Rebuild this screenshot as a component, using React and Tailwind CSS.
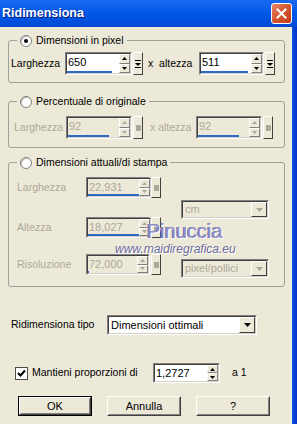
import React from "react";

const Arrow = ({ dir, color, w = 5, h = 3 }) => (
  <svg width={w} height={h} viewBox={`0 0 ${w} ${h}`}>
    <polygon
      points={dir === "up" ? `${w / 2},0 ${w},${h} 0,${h}` : `0,0 ${w},0 ${w / 2},${h}`}
      fill={color}
    />
  </svg>
);

const SpinBtn = ({ dir, disabled }) => (
  <div className="flex-1 flex items-center justify-center bg-[#ece9d8] border border-t-white border-l-white border-b-[#808080] border-r-[#808080]">
    <Arrow dir={dir} color={disabled ? "#aca899" : "#000"} />
  </div>
);

const ExtraBtn = ({ disabled }) => (
  <div className="w-[10px] flex items-center justify-center bg-[#ece9d8] border border-t-white border-l-white border-b-[#404040] border-r-[#404040]">
    {disabled ? (
      <div className="w-[5px] h-[6px] bg-[#aca899]" />
    ) : (
      <svg width="6" height="9" viewBox="0 0 6 9">
        <rect x="0" y="1" width="6" height="1" fill="#000" />
        <polygon points="0,4 6,4 3,7" fill="#000" />
        <rect x="0" y="8" width="6" height="1" fill="#000" />
      </svg>
    )}
  </div>
);

const Sunken = ({ className = "", inner = "", children }) => (
  <div className={`flex border border-t-[#808080] border-l-[#808080] border-b-white border-r-white ${className}`}>
    <div className={`flex-1 flex border border-t-[#404040] border-l-[#404040] border-b-[#d4d0c8] border-r-[#d4d0c8] ${inner}`}>
      {children}
    </div>
  </div>
);

const SpinField = ({ value, w, bar, disabled, h = "h-[23px]", extra = true }) => (
  <div className={`flex gap-[1px] ${h}`}>
    <Sunken className={w} inner={disabled ? "bg-[#ece9d8]" : "bg-white"}>
      <div className="flex-1 flex flex-col">
        <span className={`pl-[1px] pt-[1px] text-[11px] leading-[14px] ${disabled ? "text-[#aca899]" : "text-black"}`}>
          {value}
        </span>
        <div className="mt-auto h-[2px] bg-[#316ac5]" style={{ width: bar }} />
      </div>
      <div className="w-[11px] flex flex-col">
        <SpinBtn dir="up" disabled={disabled} />
        <SpinBtn dir="down" disabled={disabled} />
      </div>
    </Sunken>
    {extra && <ExtraBtn disabled={disabled} />}
  </div>
);

const Combo = ({ value, w, h, disabled }) => (
  <Sunken className={`${w} ${h}`} inner={disabled ? "bg-[#ece9d8]" : "bg-white"}>
    <span className={`flex-1 pl-[2px] flex items-center text-[11px] ${disabled ? "text-[#aca899]" : "text-black"}`}>
      {value}
    </span>
    <div className="w-[16px] flex items-center justify-center bg-[#ece9d8] border border-t-white border-l-white border-b-[#404040] border-r-[#404040]">
      <Arrow dir="down" w={7} h={4} color={disabled ? "#aca899" : "#000"} />
    </div>
  </Sunken>
);

const Radio = ({ checked }) => (
  <span className="w-[12px] h-[12px] rounded-full border border-[#7f7f7f] bg-white shadow-[inset_1px_1px_0_#c0c0c0] flex items-center justify-center">
    {checked && <span className="w-[4px] h-[4px] rounded-full bg-black" />}
  </span>
);

const Legend = ({ checked, children }) => (
  <legend className="ml-[8px] px-[3px]">
    <span className="flex items-center gap-[4px] h-[13px] leading-[13px]">
      <Radio checked={checked} />
      <span className="text-black">{children}</span>
    </span>
  </legend>
);

const Button = ({ children, isDefault }) => (
  <div className={`w-[74px] h-[20px] ${isDefault ? "border border-black" : ""}`}>
    <div className="h-full flex border border-t-white border-l-white border-b-[#404040] border-r-[#404040]">
      <div className="flex-1 flex items-center justify-center bg-[#ece9d8] border border-transparent border-b-[#808080] border-r-[#808080] text-[11px]">
        {children}
      </div>
    </div>
  </div>
);

export default function App() {
  return (
    <div className="relative w-[297px] h-[424px] overflow-hidden flex flex-col bg-[#ece9d8] font-['Liberation_Sans',Arial,sans-serif] text-[10.5px] text-black select-none">
      {/* title bar */}
      <div className="h-[27px] shrink-0 flex items-center justify-between pl-[2px] pr-[5px] bg-gradient-to-b from-[#1a68ef] via-[#0057e6] to-[#0049d6]">
        <span className="text-white font-bold text-[12.5px] [text-shadow:1px_1px_0_#0a1a7a]">Ridimensiona</span>
        <div className="w-[21px] h-[21px] rounded-[3px] border border-white bg-gradient-to-br from-[#e8866a] via-[#d4552f] to-[#c13d16] flex items-center justify-center">
          <svg width="11" height="11" viewBox="0 0 11 11">
            <path d="M1.5 1.5 L9.5 9.5 M9.5 1.5 L1.5 9.5" stroke="#fff" strokeWidth="2" strokeLinecap="square" />
          </svg>
        </div>
      </div>

      <div className="flex-1 flex">
        <div className="flex-1 flex flex-col pl-[8px] pr-[6px]">
          {/* group 1 */}
          <fieldset className="mt-[7px] border border-[#a0a09a] rounded-[3px] pb-[7px]">
            <Legend checked>Dimensioni in pixel</Legend>
            <div className="mt-[5px] flex items-center pl-[2px]">
              <span className="w-[54px]">Larghezza</span>
              <SpinField value="650" w="w-[67px]" bar={45} />
              <span className="ml-[5px] w-[51px]">x&nbsp; altezza</span>
              <SpinField value="511" w="w-[65px]" bar={47} />
            </div>
          </fieldset>

          {/* group 2 */}
          <fieldset className="mt-[12px] border border-[#a0a09a] rounded-[3px] pb-[8px]">
            <Legend>Percentuale di originale</Legend>
            <div className="mt-[8px] flex items-center pl-[5px] text-[#aca899]">
              <span className="w-[52px]">Larghezza</span>
              <SpinField value="92" w="w-[66px]" bar={41} disabled />
              <span className="ml-[7px] w-[46px]">x altezza</span>
              <SpinField value="92" w="w-[66px]" bar={41} disabled />
            </div>
          </fieldset>

          {/* group 3 */}
          <fieldset className="mt-[8px] border border-[#a0a09a] rounded-[3px] pb-[8px]">
            <Legend>Dimensioni attuali/di stampa</Legend>
            <div className="mt-[8px] flex pl-[8px] text-[#aca899]">
              <div className="flex flex-col">
                <div className="flex items-center">
                  <span className="w-[69px]">Larghezza</span>
                  <SpinField value="22,931" w="w-[64px]" bar={51} h="h-[21px]" disabled />
                </div>
                <div className="mt-[19px] flex items-center">
                  <span className="w-[69px]">Altezza</span>
                  <SpinField value="18,027" w="w-[64px]" bar={51} h="h-[21px]" disabled />
                </div>
                <div className="mt-[16px] flex items-center">
                  <span className="w-[69px]">Risoluzione</span>
                  <SpinField value="72,000" w="w-[64px]" bar={1} h="h-[21px]" disabled />
                </div>
              </div>
              <div className="ml-[20px] flex flex-col">
                <div className="mt-[23px]">
                  <Combo value="cm" w="w-[88px]" h="h-[19px]" disabled />
                </div>
                <div className="mt-[40px]">
                  <Combo value="pixel/pollici" w="w-[88px]" h="h-[19px]" disabled />
                </div>
              </div>
            </div>
          </fieldset>

          {/* resize type */}
          <div className="mt-[28px] flex items-center pl-[3px]">
            <span className="w-[96px]">Ridimensiona tipo</span>
            <Combo value="Dimensioni ottimali" w="w-[150px]" h="h-[20px]" />
          </div>

          {/* keep proportions */}
          <div className="mt-[28px] flex items-center pl-[7px]">
            <span className="w-[13px] h-[13px] border border-[#4d4d4d] bg-white flex items-center justify-center">
              <svg width="9" height="9" viewBox="0 0 9 9">
                <path d="M1 4 L3.5 6.5 L8 1.5" stroke="#000" strokeWidth="2" fill="none" />
              </svg>
            </span>
            <span className="ml-[4px] w-[121px]">Mantieni proporzioni di</span>
            <SpinField value="1,2727" w="w-[67px]" bar={0} h="h-[20px]" extra={false} />
            <span className="ml-[12px]">a 1</span>
          </div>

          {/* buttons */}
          <div className="mt-[13px] flex gap-[15px] pl-[10px]">
            <Button isDefault>OK</Button>
            <Button>Annulla</Button>
            <Button>?</Button>
          </div>
        </div>
        <div className="w-[6px] flex">
          <div className="w-[1px] bg-[#f5f4ee]" />
          <div className="flex-1 bg-gradient-to-r from-[#0a4fe2] to-[#0731c5]" />
        </div>
      </div>

      {/* watermark overlay */}
      <span className="absolute left-[147px] top-[220px] text-[20px] leading-[22px] text-[#8f8fc6] [text-shadow:1px_1px_0_#ffffff,-1px_0_0_#6f6fa8]">
        Pinuccia
      </span>
      <span className="absolute left-[115px] top-[242px] text-[12px] leading-[14px] italic text-[#6c6c9e] [text-shadow:1px_1px_0_#ffffff]">
        www.maidiregrafica.eu
      </span>
    </div>
  );
}
